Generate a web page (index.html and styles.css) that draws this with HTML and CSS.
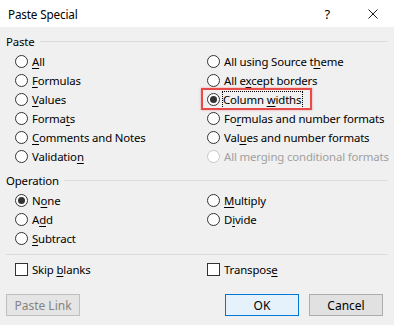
FILE: index.html
```html
<!DOCTYPE html>
<html lang="en">
<head>
  <meta charset="UTF-8">
  <title>Paste Special</title>
  <link rel="stylesheet" href="styles.css">
</head>
<body>
  <div class="dialog">
    <div class="titlebar">
      <span class="title">Paste Special</span>
      <span class="help">?</span>
      <svg class="close" width="10" height="10" viewBox="0 0 10 10">
        <path d="M0.5 0.5 L9.5 9.5 M9.5 0.5 L0.5 9.5" stroke="#1a1a1a" stroke-width="1"/>
      </svg>
    </div>

    <div class="content">
      <div class="legend"><span>Paste</span></div>
      <div class="options">
        <label class="opt"><span class="radio"></span><span><u>A</u>ll</span></label>
        <label class="opt"><span class="radio"></span><span>All using Source t<u>h</u>eme</span></label>
        <label class="opt"><span class="radio"></span><span><u>F</u>ormulas</span></label>
        <label class="opt"><span class="radio"></span><span>All e<u>x</u>cept borders</span></label>
        <label class="opt"><span class="radio"></span><span><u>V</u>alues</span></label>
        <label class="opt marked"><span class="radio on"></span><span class="focus">Column <u>w</u>idths</span></label>
        <label class="opt"><span class="radio"></span><span>Forma<u>t</u>s</span></label>
        <label class="opt"><span class="radio"></span><span>Fo<u>r</u>mulas and number formats</span></label>
        <label class="opt"><span class="radio"></span><span><u>C</u>omments and Notes</span></label>
        <label class="opt"><span class="radio"></span><span>Val<u>u</u>es and number formats</span></label>
        <label class="opt"><span class="radio"></span><span>Validatio<u>n</u></span></label>
        <label class="opt off"><span class="radio"></span><span>All merging conditional formats</span></label>
      </div>

      <div class="legend op"><span>Operation</span></div>
      <div class="options">
        <label class="opt"><span class="radio on"></span><span>N<u>o</u>ne</span></label>
        <label class="opt"><span class="radio"></span><span><u>M</u>ultiply</span></label>
        <label class="opt"><span class="radio"></span><span>A<u>d</u>d</span></label>
        <label class="opt"><span class="radio"></span><span>D<u>i</u>vide</span></label>
        <label class="opt"><span class="radio"></span><span><u>S</u>ubtract</span></label>
      </div>

      <div class="sep"></div>

      <div class="options checks">
        <label class="opt"><span class="check"></span><span>Skip <u>b</u>lanks</span></label>
        <label class="opt"><span class="check"></span><span>Transpos<u>e</u></span></label>
      </div>

      <div class="buttons">
        <button class="btn disabled">Paste Link</button>
        <span class="spacer"></span>
        <button class="btn primary">OK</button>
        <button class="btn">Cancel</button>
      </div>
    </div>
  </div>
</body>
</html>
```

FILE: styles.css
```css
body {
  margin: 0;
  background: #f0f0f0;
  font-family: "Noto Sans", "Open Sans", sans-serif;
  font-size: 11.4px;
  letter-spacing: -0.15px;
  color: #000;
}
.dialog {
  width: 394px;
  height: 325px;
  background: #f0f0f0;
}
.titlebar {
  height: 27px;
  background: #fff;
  display: flex;
  align-items: center;
  padding: 0 16px 0 8px;
}
.title {
  flex: 1;
  font-size: 11.7px;
}
.help {
  font-size: 13px;
  margin-right: 38px;
}
.close {
  display: block;
}
.content {
  padding: 6px 6px 0 6px;
}
.legend {
  height: 16px;
  display: flex;
  align-items: center;
}
.legend::after {
  content: "";
  flex: 1;
  height: 1px;
  background: #dcdcdc;
  margin-left: 5px;
}
.legend.op {
  margin-top: 6px;
}
.options {
  display: grid;
  grid-template-columns: 192px 1fr;
  padding-left: 9px;
  margin-top: 3px;
}
.opt {
  height: 19px;
  display: flex;
  align-items: center;
  white-space: nowrap;
  position: relative;
}
.opt u {
  text-decoration-thickness: 1px;
  text-underline-offset: 2px;
}
.radio {
  width: 11px;
  height: 11px;
  border: 1px solid #333;
  border-radius: 50%;
  background: #fff;
  margin-right: 4px;
  flex: none;
  position: relative;
}
.radio.on::after {
  content: "";
  position: absolute;
  left: 2px;
  top: 2px;
  width: 7px;
  height: 7px;
  border-radius: 50%;
  background: #333;
}
.off {
  color: #a0a0a0;
}
.off .radio {
  border-color: #c8c8c8;
}
.focus {
  outline: 1px dotted #000;
  outline-offset: 0;
  padding: 0 1px 0 0;
  margin-left: -1px;
  line-height: 16px;
}
.marked::before {
  content: "";
  position: absolute;
  left: -6px;
  top: -2px;
  width: 107px;
  height: 18px;
  border: 2px solid #e84a4a;
  box-shadow: 0 0 2px rgba(232, 74, 74, 0.5);
}
.sep {
  height: 1px;
  background: #dcdcdc;
  margin-top: 6px;
}
.checks {
  margin-top: 5px;
}
.check {
  width: 11px;
  height: 11px;
  border: 1px solid #333;
  background: #fff;
  margin-right: 4px;
  flex: none;
}
.buttons {
  display: flex;
  margin-top: 15px;
  padding-right: 5px;
}
.spacer {
  flex: 1;
}
.btn {
  width: 74px;
  height: 22px;
  font-family: inherit;
  font-size: 12px;
  background: #e1e1e1;
  border: 1px solid #adadad;
  padding: 0;
  color: #000;
}
.btn + .btn {
  margin-left: 10px;
}
.btn.disabled {
  background: #e5e5e5;
  border-color: #bfbfbf;
  color: #838383;
}
.btn.primary {
  background: #e5f1fb;
  border-color: #0078d7;
}
```
